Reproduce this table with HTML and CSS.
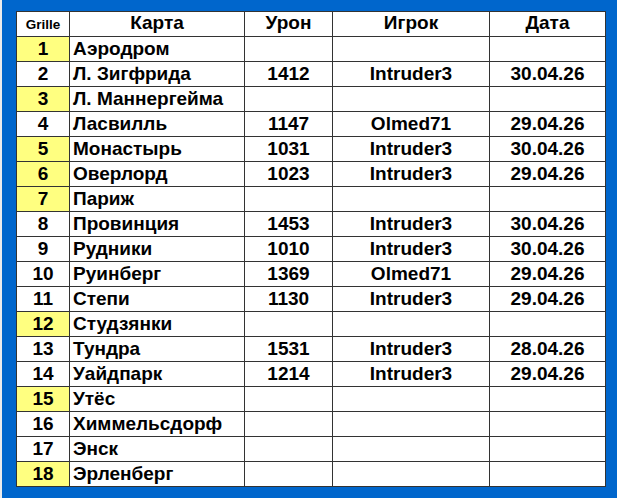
FILE: index.html
```html
<!DOCTYPE html>
<html lang="ru">
<head>
<meta charset="utf-8">
<link rel="stylesheet" href="styles.css">
</head>
<body>
<div class="edge"></div>
<div class="frame">
<table class="grid">
<colgroup>
<col class="c1"><col class="c2"><col class="c3"><col class="c4"><col class="c5">
</colgroup>
<thead>
<tr><th class="grille">Grille</th><th>Карта</th><th>Урон</th><th>Игрок</th><th>Дата</th></tr>
</thead>
<tbody>
<tr><td class="n hl">1</td><td class="map">Аэродром</td><td></td><td></td><td></td></tr>
<tr><td class="n">2</td><td class="map">Л. Зигфрида</td><td>1412</td><td>Intruder3</td><td>30.04.26</td></tr>
<tr><td class="n hl">3</td><td class="map">Л. Маннергейма</td><td></td><td></td><td></td></tr>
<tr><td class="n">4</td><td class="map">Ласвилль</td><td>1147</td><td>Olmed71</td><td>29.04.26</td></tr>
<tr><td class="n hl">5</td><td class="map">Монастырь</td><td>1031</td><td>Intruder3</td><td>30.04.26</td></tr>
<tr><td class="n hl">6</td><td class="map">Оверлорд</td><td>1023</td><td>Intruder3</td><td>29.04.26</td></tr>
<tr><td class="n hl">7</td><td class="map">Париж</td><td></td><td></td><td></td></tr>
<tr><td class="n">8</td><td class="map">Провинция</td><td>1453</td><td>Intruder3</td><td>30.04.26</td></tr>
<tr><td class="n">9</td><td class="map">Рудники</td><td>1010</td><td>Intruder3</td><td>30.04.26</td></tr>
<tr><td class="n">10</td><td class="map">Руинберг</td><td>1369</td><td>Olmed71</td><td>29.04.26</td></tr>
<tr><td class="n">11</td><td class="map">Степи</td><td>1130</td><td>Intruder3</td><td>29.04.26</td></tr>
<tr><td class="n hl">12</td><td class="map">Студзянки</td><td></td><td></td><td></td></tr>
<tr><td class="n">13</td><td class="map">Тундра</td><td>1531</td><td>Intruder3</td><td>28.04.26</td></tr>
<tr><td class="n">14</td><td class="map">Уайдпарк</td><td>1214</td><td>Intruder3</td><td>29.04.26</td></tr>
<tr><td class="n hl">15</td><td class="map">Утёс</td><td></td><td></td><td></td></tr>
<tr><td class="n">16</td><td class="map">Химмельсдорф</td><td></td><td></td><td></td></tr>
<tr><td class="n">17</td><td class="map">Энск</td><td></td><td></td><td></td></tr>
<tr><td class="n hl">18</td><td class="map">Эрленберг</td><td></td><td></td><td></td></tr>
</tbody>
</table>
</div>
</body>
</html>
```

FILE: styles.css
```css
html, body {
  margin: 0;
  padding: 0;
  height: 100%;
}
body {
  display: flex;
  background: #0066cc;
  font-family: "Liberation Sans", Arial, sans-serif;
  overflow: hidden;
}
.edge {
  width: 2px;
  flex: none;
  background: #ececec;
}
.frame {
  padding: 11px 0 0 14px;
}
.grid {
  border-collapse: collapse;
  table-layout: fixed;
  width: 590px;
  background: #ffffff;
  color: #000;
  font-weight: bold;
  font-size: 19px;
}
.c1 { width: 53px; }
.c2 { width: 175px; }
.c3 { width: 88px; }
.c4 { width: 157px; }
.c5 { width: 116px; }
.grid th, .grid td {
  height: 24px;
  padding: 0;
  border: 1px solid #333;
  text-align: center;
  vertical-align: middle;
  white-space: nowrap;
  overflow: hidden;
  line-height: 22px;
}
.grid th {
  vertical-align: baseline;
  font-size: 19px;
}
.grid th.grille {
  font-size: 13.5px;
}
.grid td.map {
  text-align: left;
  padding-left: 3px;
}
.grid td.hl {
  background: #ffff80;
}
```
